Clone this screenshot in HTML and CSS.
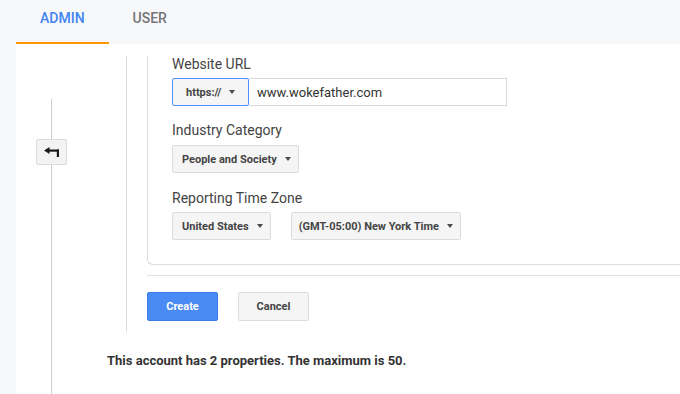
FILE: index.html
```html
<!DOCTYPE html>
<html>
<head>
<meta charset="utf-8">
<link rel="stylesheet" href="styles.css">
</head>
<body>
<div class="tabs">
  <div class="tab active">ADMIN</div>
  <div class="tab">USER</div>
</div>
<div class="main">
  <div class="strip"></div>
  <div class="content">
    <div class="rail">
      <div class="rail-line top"></div>
      <button class="back-btn" aria-label="Back">
        <svg width="15" height="10" viewBox="0 0 15 10"><path d="M0 3.5 L5.5 0 L5.5 7 Z" fill="#1a1a1a"/><rect x="4" y="2.5" width="11" height="2.2" fill="#1a1a1a"/><rect x="12.8" y="2.5" width="2.2" height="7.5" fill="#1a1a1a"/></svg>
      </button>
      <div class="rail-line rest"></div>
    </div>
    <div class="body">
      <div class="section">
        <div class="card">
          <div class="label">Website URL</div>
          <div class="row joined">
            <div class="dd dd-proto focus">https://<span class="caret"></span></div>
            <div class="url-input">www.wokefather.com</div>
          </div>
          <div class="label l2">Industry Category</div>
          <div class="row">
            <div class="dd">People and Society<span class="caret"></span></div>
          </div>
          <div class="label l3">Reporting Time Zone</div>
          <div class="row">
            <div class="dd">United States<span class="caret"></span></div>
            <div class="dd tz">(GMT-05:00) New York Time<span class="caret"></span></div>
          </div>
        </div>
        <div class="actions">
          <button class="btn primary">Create</button>
          <button class="btn">Cancel</button>
        </div>
      </div>
      <p class="note">This account has 2 properties. The maximum is 50.</p>
    </div>
  </div>
</div>
</body>
</html>
```
FILE: styles.css
```css
* { box-sizing: border-box; }
html, body { margin: 0; padding: 0; }
body {
  font-family: Roboto, "Liberation Sans", Arial, sans-serif;
  background: #ffffff;
  color: #444;
  height: 394px;
  overflow: hidden;
}
.tabs {
  height: 44px;
  background: #f7f8fa;
  display: flex;
  padding-left: 16px;
}
.tab {
  font-size: 14px;
  font-weight: 500;
  line-height: 16px;
  padding: 10px 24px 0 24px;
  color: #757575;
  height: 44px;
}
.tab.active {
  color: #4285f4;
  border-bottom: 2px solid #ff9800;
}
.main {
  display: flex;
  height: 350px;
}
.strip {
  width: 16px;
  background: #f7f8fa;
  flex: none;
}
.content {
  flex: 1;
  display: flex;
}
.rail {
  width: 91px;
  flex: none;
  display: flex;
  flex-direction: column;
  padding-left: 20px;
}
.rail-line {
  width: 1px;
  background: #cfcfcf;
  margin-left: 15px;
}
.rail-line.top { height: 40px; margin-top: 55px; }
.rail-line.rest { flex: 1; }
.back-btn {
  width: 31px;
  height: 26px;
  padding: 0;
  margin: 0;
  background: #f3f3f3;
  border: 1px solid #dcdcdc;
  border-radius: 2px;
  display: flex;
  align-items: center;
  justify-content: center;
}
.back-btn svg { display: block; margin-left: -1px; }
.body {
  flex: 1;
  padding-top: 12px;
}
.section {
  margin-left: 19px;
  border-left: 1px solid #dddddd;
  padding-left: 20px;
  padding-bottom: 11px;
}
.card {
  border-left: 1px solid #dddddd;
  border-bottom: 1px solid #dddddd;
  border-bottom-left-radius: 6px;
  padding: 0 0 24px 24px;
}
.label {
  font-size: 14px;
  line-height: 17px;
  color: #444;
  margin-bottom: 5px;
}
.label.l2 { margin-top: 16px; margin-bottom: 6px; }
.label.l3 { margin-top: 17px; }
.row {
  display: flex;
  gap: 20px;
}
.row.joined { gap: 0; }
.dd {
  height: 28px;
  display: flex;
  align-items: center;
  padding: 0 7px 0 9px;
  background: #f5f5f5;
  border: 1px solid #dcdcdc;
  border-radius: 2px;
  font-size: 11px;
  font-weight: 700;
  color: #444;
  white-space: nowrap;
}
.dd.tz { padding-left: 7px; }
.caret {
  display: inline-block;
  width: 0;
  height: 0;
  border-left: 3.5px solid transparent;
  border-right: 3.5px solid transparent;
  border-top: 4px solid #4a4a4a;
  margin-left: 8px;
}
.dd-proto {
  width: 77px;
  padding: 0 0 0 13px;
}
.dd-proto .caret { margin-left: 8px; }
.focus { border-color: #4d90fe; }
.url-input {
  width: 258px;
  height: 28px;
  border: 1px solid #d9d9d9;
  border-left: none;
  display: flex;
  align-items: center;
  padding-left: 8px;
  font-size: 13px;
  color: #333;
}
.actions {
  margin-top: 10px;
  border-top: 1px solid #e0e0e0;
  padding-top: 16px;
  display: flex;
  gap: 20px;
}
.btn {
  width: 71px;
  height: 29px;
  margin: 0;
  padding: 0;
  font-family: Roboto, "Liberation Sans", Arial, sans-serif;
  font-size: 11px;
  font-weight: 700;
  color: #444;
  background: #f5f5f5;
  border: 1px solid #dcdcdc;
  border-radius: 2px;
}
.btn.primary {
  background: #4a8af4;
  border-color: #3b7de8;
  color: #fff;
}
.note {
  margin: 21px 0 0 0;
  font-size: 13px;
  line-height: 16px;
  font-weight: 700;
  color: #333;
}
```
